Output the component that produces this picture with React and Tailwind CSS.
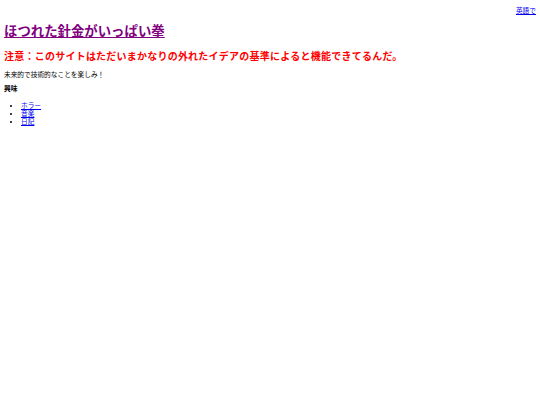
import React from 'react';

const App = () => {
  return (
    <div className="min-h-[405px] w-full bg-white px-[4px] pt-[7px] font-['Liberation_Serif','Noto_Sans_CJK_JP',serif] text-black">
      {/* Language switch */}
      <div className="flex justify-end text-[6.7px] leading-[8px]">
        <a href="#" className="text-[#0000ee] underline">英語で</a>
      </div>

      {/* Title */}
      <h1 className="mt-[8.5px] text-[13.4px] font-bold leading-[16px]">
        <a href="#" className="text-[#800080] underline">ほつれた針金がいっぱい拳</a>
      </h1>

      <h2 className="mt-[11px] text-[10px] font-bold leading-[12px] tracking-[0.24px] text-[#ff0000]">
        注意：このサイトはただいまかなりの外れたイデアの基準によると機能できてるんだ。
      </h2>

      <p className="mt-[8.5px] text-[6.7px] leading-[8px]">未来的で技術的なことを楽しみ！</p>

      <h4 className="mt-[6px] text-[6.7px] font-bold leading-[8px]">興味</h4>

      <ul className="mt-[9px] list-disc pl-[17px] text-[6.7px] leading-[8px]">
        <li><a href="#" className="text-[#0000ee] underline">ホラー</a></li>
        <li><a href="#" className="text-[#0000ee] underline">音楽</a></li>
        <li><a href="#" className="text-[#0000ee] underline">日記</a></li>
      </ul>
    </div>
  );
};

export default App;
